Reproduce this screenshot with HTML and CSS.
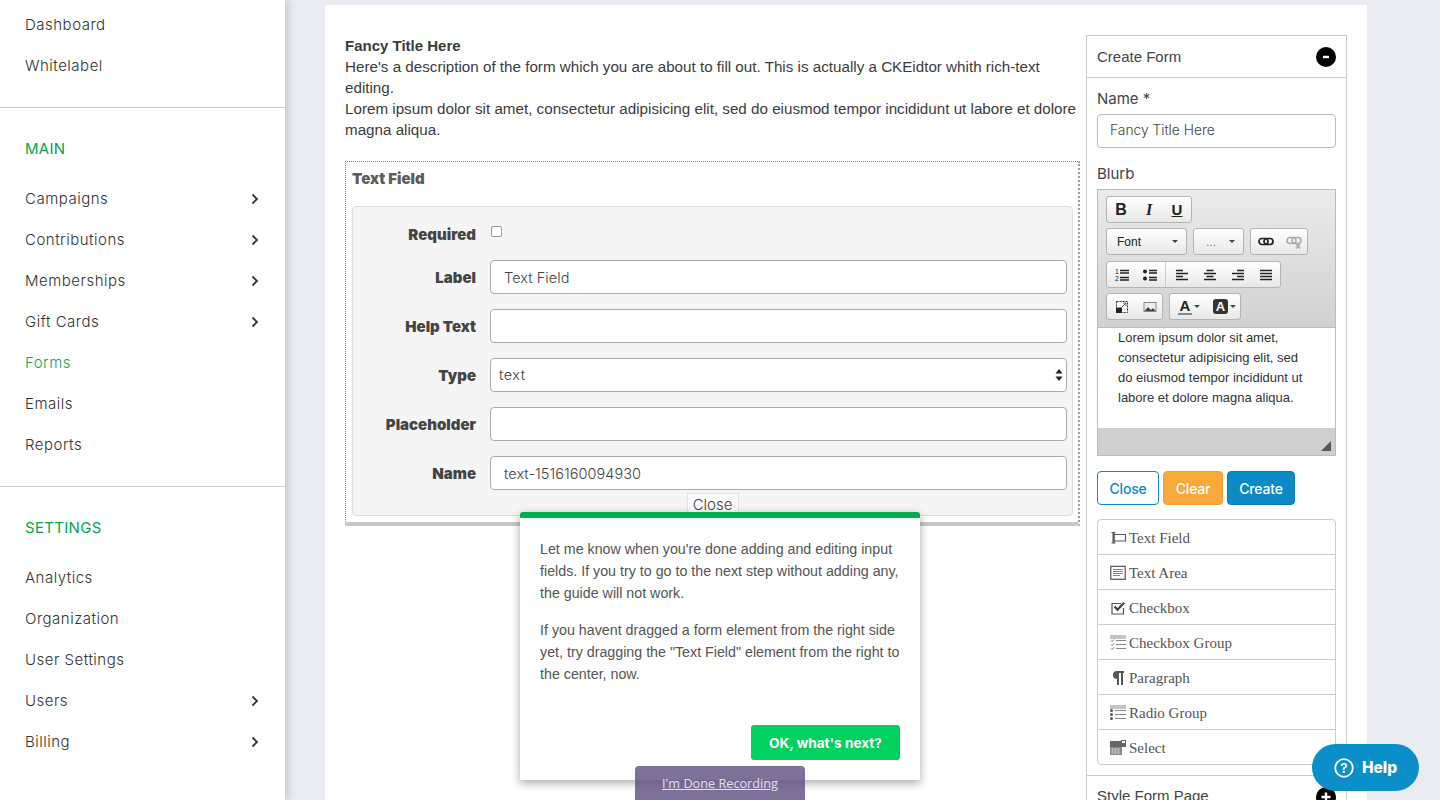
FILE: index.html
```html
<!DOCTYPE html>
<html lang="en">
<head>
<meta charset="utf-8">
<title>Create Form</title>
<link rel="stylesheet" href="styles.css">
</head>
<body>
<div class="app">
  <aside class="sidebar">
    <nav class="group group-top">
      <a class="item">Dashboard</a>
      <a class="item">Whitelabel</a>
    </nav>
    <nav class="group">
      <h3 class="heading">MAIN</h3>
      <a class="item">Campaigns<svg class="chev" viewBox="0 0 8 12"><path d="M1.5 1.5 6 6l-4.500 4.500"/></svg></a>
      <a class="item">Contributions<svg class="chev" viewBox="0 0 8 12"><path d="M1.5 1.5 6 6l-4.500 4.500"/></svg></a>
      <a class="item">Memberships<svg class="chev" viewBox="0 0 8 12"><path d="M1.5 1.5 6 6l-4.500 4.500"/></svg></a>
      <a class="item">Gift Cards<svg class="chev" viewBox="0 0 8 12"><path d="M1.5 1.5 6 6l-4.500 4.500"/></svg></a>
      <a class="item active">Forms</a>
      <a class="item">Emails</a>
      <a class="item">Reports</a>
    </nav>
    <nav class="group group-last">
      <h3 class="heading">SETTINGS</h3>
      <a class="item">Analytics</a>
      <a class="item">Organization</a>
      <a class="item">User Settings</a>
      <a class="item">Users<svg class="chev" viewBox="0 0 8 12"><path d="M1.5 1.5 6 6l-4.500 4.500"/></svg></a>
      <a class="item">Billing<svg class="chev" viewBox="0 0 8 12"><path d="M1.5 1.5 6 6l-4.500 4.500"/></svg></a>
    </nav>
  </aside>

  <main class="page">
    <div class="canvas">
      <section class="preview">
        <div class="blurb">
          <strong>Fancy Title Here</strong><br>
          Here's a description of the form which you are about to fill out. This is actually a CKEidtor whith rich-text editing.<br>
          Lorem ipsum dolor sit amet, consectetur adipisicing elit, sed do eiusmod tempor incididunt ut labore et dolore magna aliqua.
        </div>
        <div class="field-box">
          <div class="field-title">Text Field</div>
          <div class="well">
            <div class="row row-check"><label class="row-label">Required</label><input class="check" type="checkbox"></div>
            <div class="row"><label class="row-label">Label</label><input class="text-input" type="text" value="Text Field"></div>
            <div class="row"><label class="row-label">Help Text</label><input class="text-input" type="text"></div>
            <div class="row"><label class="row-label">Type</label>
              <div class="select-wrap"><select class="text-input select-input"><option>text</option></select>
                <svg class="select-arrows" viewBox="0 0 8 12"><path d="M4 0 7.500 4.500H.5zM4 12 .5 7.500h7z"/></svg></div>
            </div>
            <div class="row"><label class="row-label">Placeholder</label><input class="text-input" type="text"></div>
            <div class="row"><label class="row-label">Name</label><input class="text-input" type="text" value="text-1516160094930"></div>
            <div class="close-row"><button class="close-small">Close</button></div>
          </div>
        </div>
      </section>

      <aside class="panel">
        <header class="panel-head"><span>Create Form</span>
          <svg class="round-icon" viewBox="0 0 20 20"><circle cx="10" cy="10" r="10"/><path class="round-mark" d="M7 10h6"/></svg>
        </header>
        <div class="panel-body">
          <div class="control-label">Name *</div>
          <input class="panel-input" type="text" value="Fancy Title Here">
          <div class="control-label blurb-label">Blurb</div>
          <div class="editor">
            <div class="toolbar">
              <div class="tool-row">
                <div class="tool-group w-86"><b class="t-b">B</b><i class="t-i">I</i><u class="t-u">U</u></div>
              </div>
              <div class="tool-row">
                <div class="tool-group w-81 combo"><span>Font</span><em class="caret"></em></div>
                <div class="tool-group w-51 combo dots"><span>...</span><em class="caret"></em></div>
                <div class="tool-group w-58 icons">
                  <svg class="ti" viewBox="0 0 16 16"><rect class="ln dark" x="1" y="4.500" width="9" height="6" rx="3"/><rect class="ln dark" x="6" y="4.500" width="9" height="6" rx="3"/></svg>
                  <svg class="ti" viewBox="0 0 16 16"><rect class="ln pale" x="1" y="3.500" width="9" height="6" rx="3"/><rect class="ln pale" x="6" y="3.500" width="9" height="6" rx="3"/><path class="ln pale" d="M10 10l4 4.500M14 10l-4 4.500"/></svg>
                </div>
              </div>
              <div class="tool-row">
                <div class="tool-group w-175 icons">
                  <svg class="ti" viewBox="0 0 16 16"><path class="ln" d="M6 3.500h9M6 6h9M6 10.500h9M6 13h9"/><text class="num" x="1" y="7">1</text><text class="num" x="1" y="14">2</text></svg>
                  <svg class="ti" viewBox="0 0 16 16"><circle cx="3" cy="4.500" r="2"/><circle cx="3" cy="11.500" r="2"/><path class="ln" d="M7 3.500h8M7 6h8M7 10.500h8M7 13h8"/></svg>
                  <span class="tool-sep"></span>
                  <svg class="ti" viewBox="0 0 16 16"><path class="ln" d="M2 3.500h7M2 6.500h12M2 9.500h7M2 12.500h12"/></svg>
                  <svg class="ti" viewBox="0 0 16 16"><path class="ln" d="M4.500 3.500h7M2 6.500h12M4.500 9.500h7M2 12.500h12"/></svg>
                  <svg class="ti" viewBox="0 0 16 16"><path class="ln" d="M7 3.500h7M2 6.500h12M7 9.500h7M2 12.500h12"/></svg>
                  <svg class="ti" viewBox="0 0 16 16"><path class="ln" d="M2 3.500h12M2 6.500h12M2 9.500h12M2 12.500h12"/></svg>
                </div>
              </div>
              <div class="tool-row">
                <div class="tool-group w-57 icons">
                  <svg class="ti" viewBox="0 0 16 16"><rect class="dash" x="2.500" y="2.500" width="11" height="11"/><path d="M2 14V8.500h6V14z"/><path d="M8 8l4-4M12 4v3M12 4H9" class="ln thin"/></svg>
                  <svg class="ti" viewBox="0 0 16 16"><rect x="1.500" y="3" width="13" height="10" fill="#888"/><rect x="2.500" y="4" width="11" height="8" fill="#eee"/><path d="M2.500 12l3.500-4 3 3 2-2 2.500 3z" fill="#444"/></svg>
                </div>
                <div class="tool-group w-72 color-group">
                  <span class="color-a">A</span><em class="caret small"></em>
                  <span class="color-b">A</span><em class="caret small"></em>
                </div>
              </div>
            </div>
            <div class="editor-text">Lorem ipsum dolor sit amet, consectetur adipisicing elit, sed do eiusmod tempor incididunt ut labore et dolore magna aliqua.</div>
            <div class="editor-foot"><svg class="grip" viewBox="0 0 10 10"><path d="M10 0v10H0z"/></svg></div>
          </div>
          <div class="actions">
            <button class="btn btn-outline">Close</button>
            <button class="btn btn-orange">Clear</button>
            <button class="btn btn-blue">Create</button>
          </div>
          <ul class="elements">
            <li class="element"><svg class="ei" viewBox="0 0 16 16"><path class="ln mid" d="M4 4.500h11.500v6.500H4z"/><path class="ln mid" d="M1.500 2.500h4M1.500 13h4"/><path class="ln bold" d="M3.500 2.500V13"/></svg>Text Field</li>
            <li class="element"><svg class="ei" viewBox="0 0 16 16"><rect class="ln mid" x=".8" y="1.300" width="14.400" height="13"/><path class="ln grey" d="M3 4.500h10M3 6.500h10M3 8.500h10M3 10.500h7"/></svg>Text Area</li>
            <li class="element"><svg class="ei" viewBox="0 0 16 16"><path class="ln mid" d="M13.500 8v6H2V3.500h9"/><path class="ln check-mark" d="M4.500 6.500 7.500 9.800l6.500-7"/></svg>Checkbox</li>
            <li class="element"><svg class="ei" viewBox="0 0 16 16"><path class="ln grey" d="M0 1h16M0 3h16"/><path class="ln grey" d="M6 5.500h10M6 9.500h10M6 13.500h10"/><path class="ln thin" d="M1 5.500l1 1 2-2M1 9.500l1 1 2-2M1 13.500l1 1 2-2"/></svg>Checkbox Group</li>
            <li class="element"><svg class="ei" viewBox="0 0 16 16"><path d="M7 1h7v2h-1v12h-2V3H9v12H7V9a4 4 0 0 1 0-8z"/></svg>Paragraph</li>
            <li class="element"><svg class="ei" viewBox="0 0 16 16"><path class="ln grey" d="M0 1h16M0 3h16"/><path class="ln grey" d="M5 5.500h11M5 9.500h11M5 13.500h11"/><circle cx="1.500" cy="5.500" r="1.500"/><circle cx="1.500" cy="9.500" r="1.500"/><circle cx="1.500" cy="13.500" r="1.500"/></svg>Radio Group</li>
            <li class="element"><svg class="ei" viewBox="0 0 16 16"><path d="M0 1h11v3h5v3H0z" fill="#666"/><rect class="ln thin" x="11.500" y=".5" width="4" height="3"/><rect x="0" y="7" width="12" height="8" fill="#888"/><path d="M1.500 9h9M1.500 11h9M1.500 13h9" stroke="#eee" stroke-dasharray="2 1"/></svg>Select</li>
          </ul>
        </div>
        <header class="panel-head panel-head-next"><span>Style Form Page</span>
          <svg class="round-icon" viewBox="0 0 20 20"><circle cx="10" cy="10" r="10"/><path class="round-mark" d="M5.500 10h9M10 5.500v9"/></svg>
        </header>
      </aside>
    </div>
  </main>
</div>

<div class="guide">
  <p>Let me know when you're done adding and editing input fields. If you try to go to the next step without adding any, the guide will not work.</p>
  <p>If you havent dragged a form element from the right side yet, try dragging the "Text Field" element from the right to the center, now.</p>
  <div class="guide-foot"><button class="guide-btn">OK, what's next?</button></div>
</div>
<div class="recording"><a>I'm Done Recording</a></div>
<button class="help"><svg class="help-icon" viewBox="0 0 20 20"><circle cx="10" cy="10" r="8.800"/><text x="10" y="14.500">?</text></svg>Help</button>
</body>
</html>
```
FILE: styles.css
```css
* { box-sizing: border-box; }
html, body { margin: 0; height: 800px; overflow: hidden; }
body { background: #ebecf2; font-family: "Liberation Sans", Arial, sans-serif; color: #444; }
.app { display: flex; height: 800px; overflow: hidden; }

.sidebar { width: 285px; flex: none; background: #fff; height: 800px; box-shadow: 2px 0 8px rgba(60,60,90,.28); font-family: Inter, "Open Sans", sans-serif; }
.group { border-bottom: 1px solid #ccc; padding-bottom: 21px; }
.group-top { padding-top: 4px; }
.group-last { border-bottom: 0; }
.heading { margin: 0; padding: 31px 25px 19px; font-size: 15px; line-height: 20px; font-weight: 400; color: #00a651; letter-spacing: .3px; }
.item { display: flex; align-items: center; justify-content: space-between; height: 41px; padding: 0 25px; font-size: 15px; font-weight: 300; letter-spacing: .5px; color: #333; }
.item.active { color: #14a155; }
.chev { width: 8px; height: 12px; fill: none; stroke: #333; stroke-width: 1.800; margin-right: 1px; }

.page { flex: 1; padding: 5px 0 0 40px; }
.canvas { width: 1042px; background: #fff; padding: 30px 20px 0; display: flex; gap: 5px; height: 795px; }
.preview { width: 736px; flex: none; }
.blurb { font-size: 15.200px; line-height: 21px; color: #3c3c3c; height: 105px; margin-bottom: 21px; }
.blurb strong { font-size: 15px; }
.field-box { width: 735px; height: 365px; border: 1px dotted #888; border-right: 2px dotted #999; border-bottom: 4px solid #c8c8c8; padding: 0 5px 0 6px; }
.field-title { height: 44px; padding-top: 7px; font-family: Inter, sans-serif; font-weight: 900; font-size: 15px; line-height: 20px; color: #5c5c5c; }
.well { height: 310px; background: #f5f5f5; border: 1px solid #ddd; border-radius: 4px; padding: 12px 5px 0 0; }
.row { display: flex; align-items: center; gap: 14px; height: 34px; margin-bottom: 15px; }
.row-check { height: 26px; margin-bottom: 13px; margin-top: 2px; align-items: flex-start; }
.row-check .row-label { line-height: 26px; padding-top: 1px; }
.row-label { width: 123px; flex: none; text-align: right; font-family: Inter, sans-serif; font-weight: 900; font-size: 15px; color: #444; }
.check { appearance: none; width: 11px; height: 11px; margin: 5px 0 0 1px; border: 1px solid #999; border-radius: 2px; background: #fff; }
.text-input { flex: 1; width: 100%; height: 34px; border: 1px solid #aaa; border-radius: 4px; background: #fff; padding: 0 13px; font-family: Inter, sans-serif; font-weight: 300; font-size: 14.500px; letter-spacing: .05px; color: #444; outline: 0; }
.select-wrap { position: relative; flex: 1; }
.select-input { appearance: none; padding: 0 8px 1px; display: block; letter-spacing: .5px; }
.select-arrows { position: absolute; right: 4px; top: 11px; width: 8px; height: 12px; fill: #222; }
.close-row { display: flex; justify-content: center; margin-top: -12px; padding-left: 5px; }
.close-small { width: 52px; height: 22px; padding: 0; border: 1px solid #e2e2e2; background: #fafafa; font-family: Inter, sans-serif; font-weight: 300; font-size: 15px; color: #444; }

.panel { width: 261px; flex: none; border: 1px solid #ccc; border-bottom: 0; align-self: flex-start; height: 765px; overflow: hidden; }
.panel-head { display: flex; align-items: center; justify-content: space-between; height: 41px; padding: 0 10px; font-size: 15px; color: #444; font-family: "Liberation Sans", sans-serif; }
.panel-head-next span { margin-top: -2px; }
.round-icon { width: 20px; height: 20px; fill: #000; flex: none; }
.round-mark { fill: none; stroke: #fff; stroke-width: 2.400; }
.panel-body { border-top: 1px solid #ccc; border-bottom: 1px solid #ccc; padding: 11px 10px 10px; }
.control-label { font-family: Inter, sans-serif; font-weight: 400; font-size: 15px; line-height: 20px; color: #444; }
.blurb-label { margin-top: 16px; }
.panel-input { display: block; width: 239px; height: 34px; margin-top: 5px; padding: 0 12px 2px; border: 1px solid #bbb; border-radius: 4px; font-family: Inter, sans-serif; font-weight: 300; font-size: 13.800px; color: #444; outline: 0; }

.editor { width: 239px; height: 267px; margin-top: 5px; border: 1px solid #bbb; display: flex; flex-direction: column; background: #fff; }
.toolbar { height: 138px; flex: none; padding: 6px 0 0 8px; background: linear-gradient(#ebebeb, #d0d1d0); border-bottom: 1px solid #bbb; display: flex; flex-direction: column; gap: 5px; }
.tool-row { display: flex; gap: 6px; height: 27px; }
.tool-row:nth-child(3) { margin-top: 1px; }
.tool-group { display: flex; align-items: center; justify-content: space-around; height: 27px; background: linear-gradient(#fff, #e8e8e8); border: 1px solid #b4b4b4; border-radius: 3px; font-size: 13px; color: #222; padding: 0; }
.w-86 { width: 86px; } .w-81 { width: 81px; } .w-51 { width: 51px; } .w-58 { width: 58px; } .w-175 { width: 175px; } .w-57 { width: 57px; } .w-72 { width: 72px; }
.icons { justify-content: flex-start; gap: 12px; padding-left: 7px; }
.combo { justify-content: space-between; padding: 0 8px 0 10px; font-size: 12px; }
.dots { color: #777; padding-left: 12px; }
.caret { width: 0; height: 0; border: 3px solid transparent; border-top: 3px solid #444; border-bottom: 0; }
.caret.small { margin-left: -6px; }
.t-b, .t-i, .t-u { width: 28px; text-align: center; }
.t-b { font-size: 16px; } .t-i { font-family: "Liberation Serif", serif; font-size: 16px; font-weight: 700; } .t-u { font-size: 15px; font-weight: 700; }
.ti { width: 16px; height: 16px; fill: #222; flex: none; }
.ln { fill: none; stroke: #222; stroke-width: 1.500; }
.ln.dark { stroke-width: 1.700; }
.ln.pale { stroke: #aaa; }
.ln.thin { stroke: #666; stroke-width: 1; }
.ln.mid { stroke: #555; stroke-width: 1.200; }
.ln.bold { stroke: #555; stroke-width: 2; }
.ln.grey { stroke: #888; stroke-width: 1.200; }
.ln.check-mark { stroke: #444; stroke-width: 2.200; }
.num { font-size: 7px; fill: #222; font-family: "Liberation Sans", sans-serif; }
.dash { fill: #fff; stroke: #333; stroke-dasharray: 2 1; }
.tool-sep { width: 1px; height: 25px; background: #ccc; margin: 0 -4px 0 -5px; }
.color-group { justify-content: flex-start; gap: 8px; padding: 0 0 0 8px; }
.color-a { font-size: 15px; font-weight: 700; color: #222; border-bottom: 2px solid #888; line-height: 15px; width: 14px; text-align: center; }
.color-b { font-size: 13px; font-weight: 700; color: #fff; background: #333; border-radius: 3px; line-height: 15px; width: 15px; text-align: center; margin-left: 5px; }
.editor-text { flex: 1; padding: 0 25px 0 20px; font-size: 13px; line-height: 20px; color: #333; }
.editor-foot { height: 27px; flex: none; background: #cfcfcf; display: flex; align-items: flex-end; justify-content: flex-end; padding: 0 4px 4px 0; }
.grip { width: 10px; height: 10px; fill: #555; }

.actions { display: flex; gap: 4px; margin-top: 15px; }
.btn { height: 34px; border-radius: 4px; padding: 0; font-family: Inter, sans-serif; font-size: 14px; font-weight: 500; letter-spacing: -.2px; color: #fff; border: 1px solid transparent; }
.btn-outline { width: 62px; background: #fff; border-color: #0b8ac4; color: #0b8ac4; }
.btn-orange { width: 60px; background: #f9a83b; border-color: #f59f2e; }
.btn-blue { width: 68px; background: #0b8ac4; border-color: #0a80b8; }

.elements { list-style: none; margin: 14px 0 0; padding: 0; width: 239px; border: 1px solid #ccc; border-radius: 4px; }
.element { display: flex; align-items: center; height: 35px; padding: 2px 0 0 12px; gap: 3px; font-family: "Liberation Serif", serif; font-size: 15px; color: #555; border-bottom: 1px solid #ccc; }
.element:last-child { border-bottom: 0; height: 34px; }
.ei { width: 16px; height: 16px; fill: #555; flex: none; }

.guide { position: absolute; left: 520px; top: 512px; width: 400px; height: 268px; background: #fff; border-top: 6px solid #00ac4e; border-radius: 3px 3px 0 0; padding: 20px 20px 0; box-shadow: 0 3px 10px rgba(0,0,0,.35); font-size: 14.250px; line-height: 22px; color: #555; display: flex; flex-direction: column; }
.guide p { margin: 0 0 15px; }
.guide-foot { position: absolute; right: 20px; bottom: 20px; }
.guide-btn { width: 149px; height: 35px; background: #00d15f; border: 0; border-radius: 3px; color: #fff; font-family: Inter, sans-serif; font-weight: 700; font-size: 13.600px; padding: 0; }
.recording { position: absolute; left: 635px; top: 766px; width: 170px; height: 34px; background: rgba(92,76,128,.8); border-radius: 4px 4px 0 0; text-align: center; padding-top: 8px; font-family: "Open Sans", sans-serif; font-size: 12.700px; line-height: 18px; color: #e5e0ee; }
.recording a { text-decoration: underline; }
.help { position: absolute; left: 1312px; top: 744px; width: 107px; height: 47px; border: 0; border-radius: 24px; background: #0b8fc9; color: #fff; font-family: Inter, sans-serif; font-weight: 800; font-size: 15.500px; display: flex; align-items: center; justify-content: center; gap: 8px; padding: 0; }
.help-icon { width: 20px; height: 20px; }
.help-icon circle { fill: none; stroke: #fff; stroke-width: 1.800; }
.help-icon text { fill: #fff; font-size: 13px; font-weight: 700; text-anchor: middle; font-family: Inter, sans-serif; }
```
